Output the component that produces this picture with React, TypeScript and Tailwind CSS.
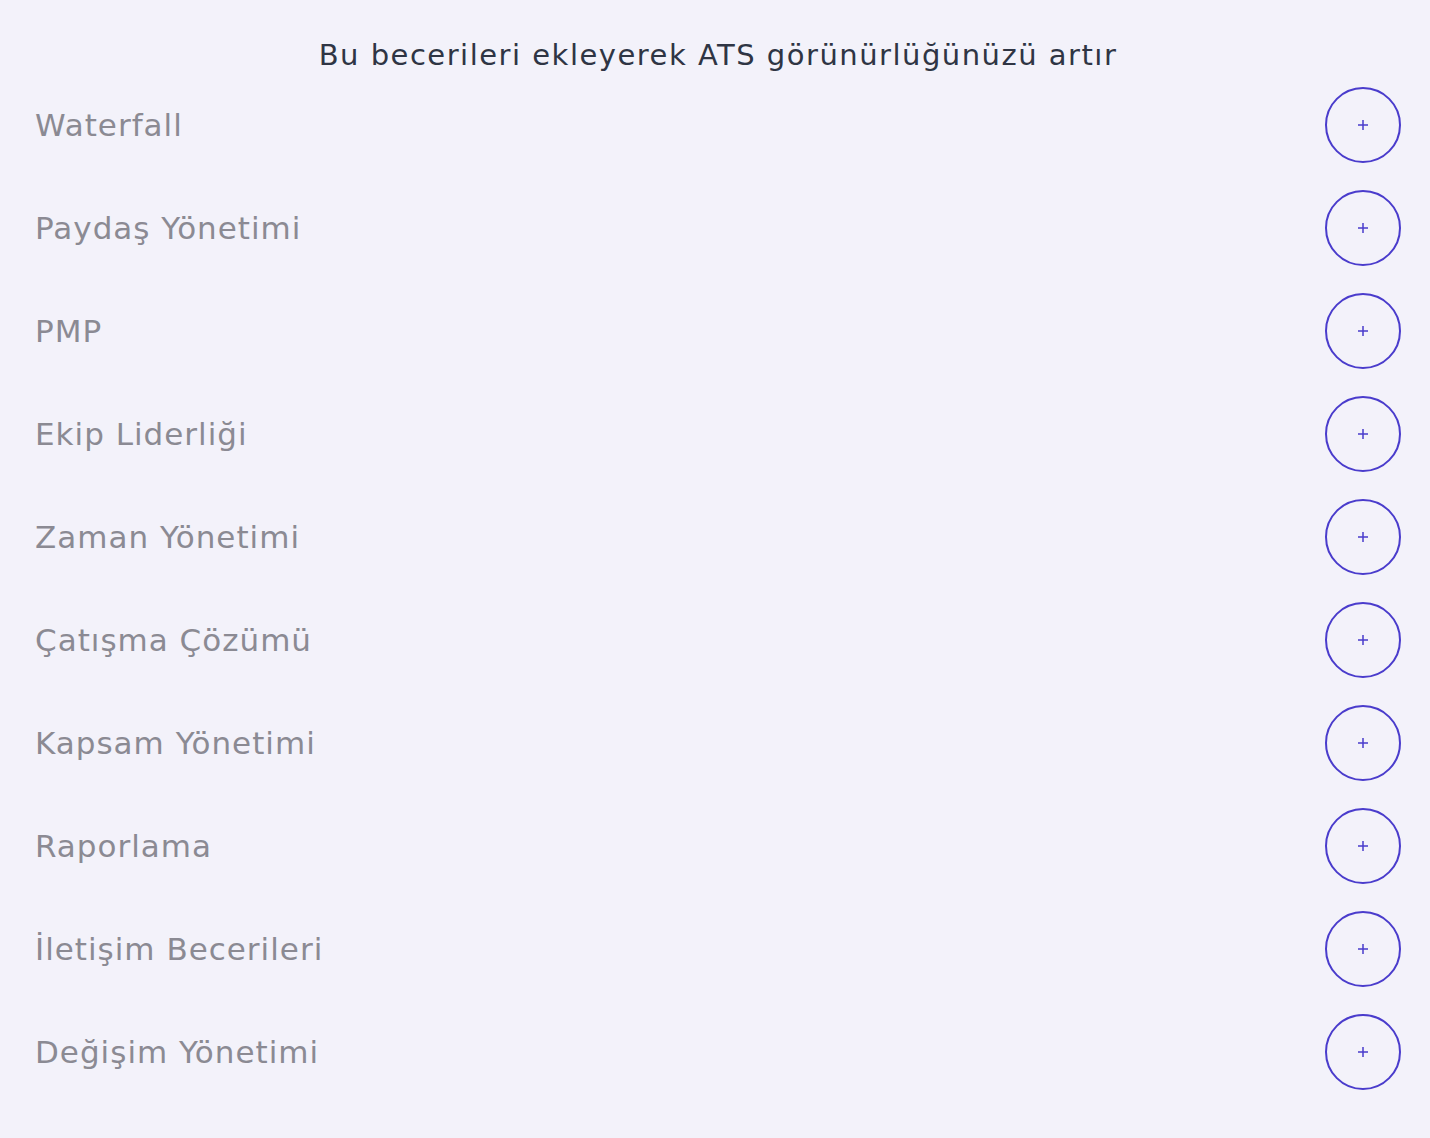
const skills = [
  "Waterfall",
  "Paydaş Yönetimi",
  "PMP",
  "Ekip Liderliği",
  "Zaman Yönetimi",
  "Çatışma Çözümü",
  "Kapsam Yönetimi",
  "Raporlama",
  "İletişim Becerileri",
  "Değişim Yönetimi",
];

export default function App() {
  return (
    <div
      className="min-h-[1138px] w-full bg-[#f3f2fa] pt-[36px] pl-[35px] pr-[29px]"
      style={{ fontFamily: '"DejaVu Sans", sans-serif' }}
    >
      <h2 className="mb-[13px] text-center text-[29px] font-normal leading-[38px] tracking-[1.5px] text-[#2f3544]">
        Bu becerileri ekleyerek ATS görünürlüğünüzü artır
      </h2>
      <ul className="flex flex-col gap-[27px]">
        {skills.map((s) => (
          <li key={s} className="flex items-center justify-between">
            <span className="text-[31px] leading-none tracking-[1px] text-[#8b8a93]">{s}</span>
            <button className="flex h-[76px] w-[76px] items-center justify-center rounded-full border-2 border-[#4a3ccc] bg-transparent text-[#4a3ccc]">
              <svg width="12" height="12" viewBox="0 0 12 12" fill="none">
                <path d="M6 1v10M1 6h10" stroke="currentColor" strokeWidth="1.5" />
              </svg>
            </button>
          </li>
        ))}
      </ul>
    </div>
  );
}
